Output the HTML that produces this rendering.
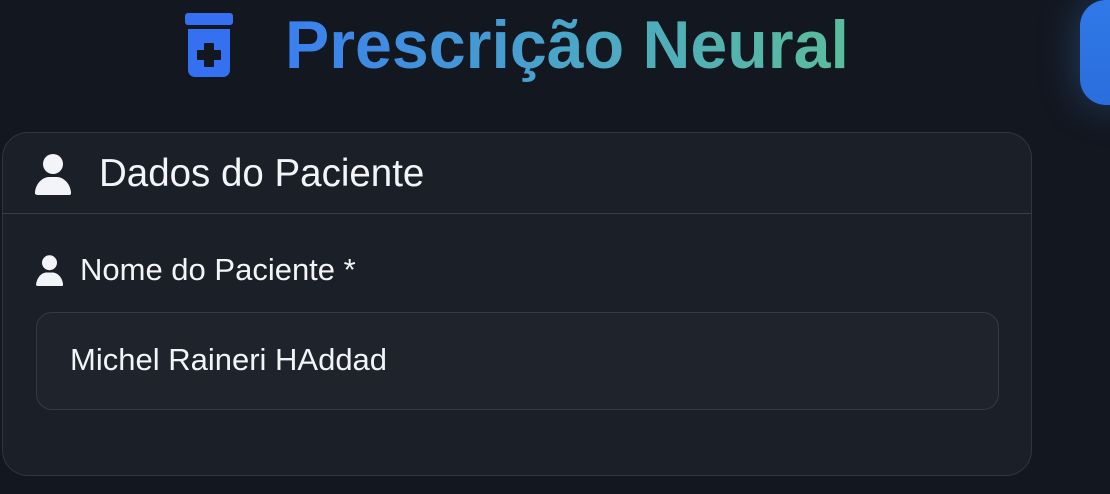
<!DOCTYPE html>
<html><head><style>
html,body{margin:0;padding:0;width:1110px;height:494px;overflow:hidden;background:#131720;font-family:"Liberation Sans",sans-serif;}
.btn{position:absolute;left:1080px;top:0;width:60px;height:105px;background:linear-gradient(180deg,#3079e8,#2b6ddc);box-shadow:0 0 40px rgba(60,140,220,0.35);border-radius:26px;}
.title{position:absolute;left:285px;top:6px;font-size:68px;font-weight:bold;white-space:nowrap;background:linear-gradient(90deg,#3a7ff0,#4aa6c8 50%,#5bbd9c);-webkit-background-clip:text;background-clip:text;color:transparent;transform-origin:left top;transform:scaleX(0.975);}
.card{position:absolute;left:2px;top:132px;width:1028px;height:342px;border:1px solid #30353f;border-radius:26px;background:#1b1f27;}
.hdr{position:absolute;left:0;top:80px;width:1028px;height:1px;background:#3a404b;}
.h{position:absolute;left:96px;top:19px;font-size:38.5px;color:#f2f4f7;}
.lbl{position:absolute;left:77px;top:119px;font-size:31px;color:#f2f4f7;}
.inp{position:absolute;left:33px;top:179px;width:961px;height:96px;border:1px solid #343a45;border-radius:16px;background:#1e232c;}
.val{position:absolute;left:33px;top:29px;font-size:31px;color:#f2f4f7;}
</style></head><body>
<div class="btn"></div>
<svg style="position:absolute;left:183px;top:12px" width="52" height="66" viewBox="0 0 52 66">
<rect x="2" y="1" width="48" height="12" rx="3" fill="#3570f0"/>
<path d="M5 17 H47 V58 a7 7 0 0 1 -7 7 H12 a7 7 0 0 1 -7 -7 Z" fill="#3570f0"/>
<path d="M22 32 h8 v7 h7 v8 h-7 v7 h-8 v-7 h-7 v-8 h7 Z" fill="#131720" stroke="#131720" stroke-linejoin="round" stroke-width="2"/>
</svg>
<div class="title">Prescrição Neural</div>
<div class="card">
<svg style="position:absolute;left:32px;top:21px" width="36" height="42" viewBox="0 0 36 42"><circle cx="18" cy="10" r="10" fill="#f2f4f7"/><path d="M0 40 a4 4 0 0 1 0 -2 C1 29 8 23 14 23 h8 c6 0 13 6 14 15 a2 2 0 0 1 -2 3 H2 Z" fill="#f2f4f7"/></svg>
<div class="h">Dados do Paciente</div>
<div class="hdr"></div>
<svg style="position:absolute;left:33px;top:122px" width="27" height="32" viewBox="0 0 36 42"><circle cx="18" cy="10" r="10" fill="#f2f4f7"/><path d="M0 40 C1 29 8 23 14 23 h8 c6 0 13 6 14 15 a2 2 0 0 1 -2 3 H2 Z" fill="#f2f4f7"/></svg>
<div class="lbl">Nome do Paciente *</div>
<div class="inp"><div class="val">Michel Raineri HAddad</div></div>
</div>
</body></html>
